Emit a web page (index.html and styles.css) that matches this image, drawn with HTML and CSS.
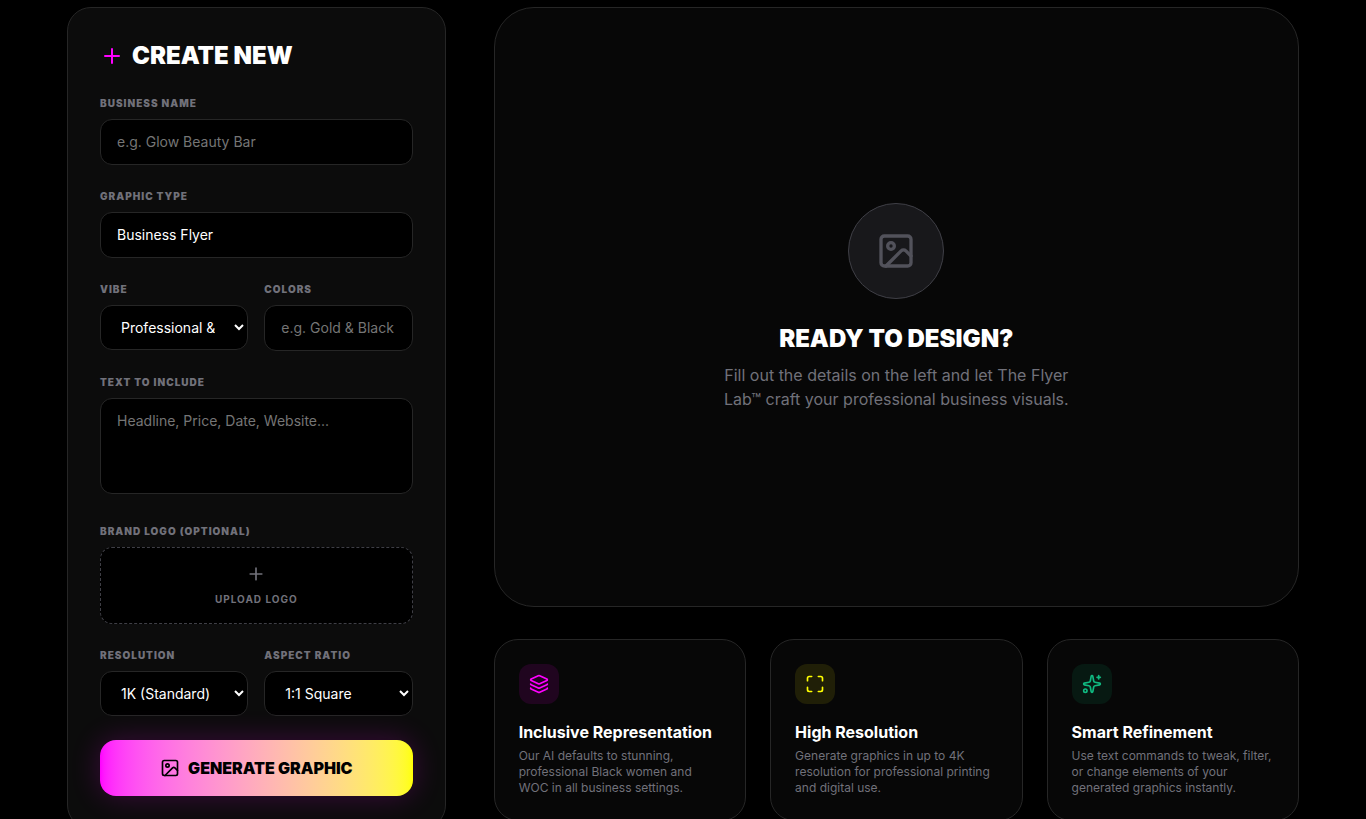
FILE: index.html
```html
<!DOCTYPE html>
<html lang="en">
<head>
    <meta charset="UTF-8">
    <meta name="viewport" content="width=device-width, initial-scale=1.0">
    <title>The Flyer Lab</title>
    <link rel="stylesheet" href="styles.css">
</head>
<body>
    <main class="layout">
        <form class="panel">
            <h2 class="panel-title">
                <svg class="icon icon-plus" width="24" height="24" viewBox="0 0 24 24"><path d="M5 12h14M12 5v14"/></svg>
                CREATE NEW
            </h2>

            <div class="field">
                <label for="businessName">Business Name</label>
                <input type="text" id="businessName" class="control" placeholder="e.g. Glow Beauty Bar">
            </div>

            <div class="field">
                <label for="graphicType">Graphic Type</label>
                <select id="graphicType" class="control control-plain">
                    <option>Business Flyer</option>
                    <option>Social Post</option>
                    <option>Logo</option>
                </select>
            </div>

            <div class="field-row">
                <div class="field">
                    <label for="vibe">Vibe</label>
                    <select id="vibe" class="control">
                        <option>Professional &amp; Clean</option>
                        <option>Bold &amp; Bright</option>
                    </select>
                </div>
                <div class="field">
                    <label for="colors">Colors</label>
                    <input type="text" id="colors" class="control" placeholder="e.g. Gold &amp; Black">
                </div>
            </div>

            <div class="field field-text">
                <label for="textInclude">Text to Include</label>
                <textarea id="textInclude" class="control" placeholder="Headline, Price, Date, Website..."></textarea>
            </div>

            <div class="field">
                <label for="logoBtn">Brand Logo (Optional)</label>
                <button type="button" id="logoBtn" class="upload">
                    <svg class="icon" width="20" height="20" viewBox="0 0 24 24"><path d="M5 12h14M12 5v14"/></svg>
                    <span>Upload Logo</span>
                </button>
            </div>

            <div class="field-row">
                <div class="field">
                    <label for="resolution">Resolution</label>
                    <select id="resolution" class="control">
                        <option>1K (Standard)</option>
                        <option>2K (High)</option>
                        <option>4K (Ultra)</option>
                    </select>
                </div>
                <div class="field">
                    <label for="aspect">Aspect Ratio</label>
                    <select id="aspect" class="control">
                        <option>1:1 Square</option>
                        <option>9:16 Story</option>
                        <option>16:9 Wide</option>
                    </select>
                </div>
            </div>

            <button type="submit" class="generate">
                <svg class="icon" width="20" height="20" viewBox="0 0 24 24"><rect x="3" y="3" width="18" height="18" rx="2"/><circle cx="9" cy="9" r="2"/><path d="m21 15-3.086-3.086a2 2 0 0 0-2.828 0L6 21"/></svg>
                GENERATE GRAPHIC
            </button>
        </form>

        <div class="content">
            <section class="preview">
                <div class="preview-icon">
                    <svg class="icon" width="40" height="40" viewBox="0 0 24 24"><rect x="3" y="3" width="18" height="18" rx="2"/><circle cx="9" cy="9" r="2"/><path d="m21 15-3.086-3.086a2 2 0 0 0-2.828 0L6 21"/></svg>
                </div>
                <h3>READY TO DESIGN?</h3>
                <p>Fill out the details on the left and let The Flyer Lab™ craft your professional business visuals.</p>
            </section>

            <section class="features">
                <article class="feature">
                    <div class="badge badge-pink">
                        <svg class="icon" width="20" height="20" viewBox="0 0 24 24"><path d="M12.83 2.18a2 2 0 0 0-1.66 0L2.6 6.08a1 1 0 0 0 0 1.83l8.58 3.91a2 2 0 0 0 1.66 0l8.58-3.9a1 1 0 0 0 0-1.83z"/><path d="M2 12a1 1 0 0 0 .58.91l8.6 3.91a2 2 0 0 0 1.65 0l8.58-3.9A1 1 0 0 0 22 12"/><path d="M2 17a1 1 0 0 0 .58.91l8.6 3.91a2 2 0 0 0 1.65 0l8.58-3.9A1 1 0 0 0 22 17"/></svg>
                    </div>
                    <h4>Inclusive Representation</h4>
                    <p>Our AI defaults to stunning, professional Black women and WOC in all business settings.</p>
                </article>
                <article class="feature">
                    <div class="badge badge-yellow">
                        <svg class="icon" width="20" height="20" viewBox="0 0 24 24"><path d="M8 3H5a2 2 0 0 0-2 2v3"/><path d="M21 8V5a2 2 0 0 0-2-2h-3"/><path d="M3 16v3a2 2 0 0 0 2 2h3"/><path d="M16 21h3a2 2 0 0 0 2-2v-3"/></svg>
                    </div>
                    <h4>High Resolution</h4>
                    <p>Generate graphics in up to 4K resolution for professional printing and digital use.</p>
                </article>
                <article class="feature">
                    <div class="badge badge-green">
                        <svg class="icon" width="20" height="20" viewBox="0 0 24 24"><path d="M11.017 2.814a1 1 0 0 1 1.966 0l1.051 5.558a2 2 0 0 0 1.594 1.594l5.558 1.051a1 1 0 0 1 0 1.966l-5.558 1.051a2 2 0 0 0-1.594 1.594l-1.051 5.558a1 1 0 0 1-1.966 0l-1.051-5.558a2 2 0 0 0-1.594-1.594l-5.558-1.051a1 1 0 0 1 0-1.966l5.558-1.051a2 2 0 0 0 1.594-1.594z"/><path d="M20 2v4"/><path d="M22 4h-4"/><circle cx="4" cy="20" r="2"/></svg>
                    </div>
                    <h4>Smart Refinement</h4>
                    <p>Use text commands to tweak, filter, or change elements of your generated graphics instantly.</p>
                </article>
            </section>
        </div>
    </main>
</body>
</html>
```
FILE: styles.css
```css
* {
    box-sizing: border-box;
    margin: 0;
    padding: 0;
}
body {
    background: #000;
    color: #fff;
    font-family: Inter, sans-serif;
    font-size: 16px;
    line-height: 24px;
    height: 100vh;
    overflow: hidden;
}
.layout {
    display: grid;
    grid-template-columns: repeat(12, 1fr);
    gap: 48px;
    align-items: start;
    max-width: 1280px;
    margin: 0 auto;
    padding: 7px 24px;
}
.icon {
    display: block;
    flex-shrink: 0;
    fill: none;
    stroke: currentColor;
    stroke-width: 2;
    stroke-linecap: round;
    stroke-linejoin: round;
}

/* Left form */
.panel {
    grid-column: span 4;
    display: flex;
    flex-direction: column;
    gap: 24px;
    padding: 32px;
    background: #0c0c0c;
    border: 1px solid #262626;
    border-radius: 24px;
}
.panel-title {
    display: flex;
    align-items: center;
    gap: 8px;
    font-size: 24px;
    line-height: 32px;
    font-weight: 900;
}
.icon-plus {
    color: #f0f;
}
.field-row {
    display: grid;
    grid-template-columns: 1fr 1fr;
    gap: 16px;
}
.field {
    min-width: 0;
}
.field-text {
    padding-bottom: 6px;
}
label {
    display: block;
    margin-bottom: 8px;
    color: #71717a;
    font-size: 10px;
    line-height: 15px;
    font-weight: 900;
    letter-spacing: 0.1em;
    text-transform: uppercase;
}
.control {
    display: block;
    width: 100%;
    padding: 12px 16px;
    background: #000;
    color: #fff;
    border: 1px solid #262626;
    border-radius: 12px;
    font-family: inherit;
    font-size: 14px;
    line-height: 20px;
    font-weight: 400;
}
.control::placeholder {
    color: #757575;
}
select.control {
    height: 45px;
}
select.control-plain {
    height: 46px;
    appearance: none;
}
textarea.control {
    height: 96px;
    resize: none;
}
.upload {
    display: flex;
    flex-direction: column;
    align-items: center;
    gap: 8px;
    width: 100%;
    padding: 16px;
    background: #000;
    color: #71717a;
    border: 1px dashed #3f3f46;
    border-radius: 12px;
    font-family: inherit;
    font-size: 10px;
    line-height: 15px;
    font-weight: 700;
    letter-spacing: 0.1em;
    text-transform: uppercase;
    cursor: pointer;
}
.generate {
    display: flex;
    align-items: center;
    justify-content: center;
    gap: 8px;
    width: 100%;
    padding: 16px;
    background: linear-gradient(to right in oklab, #f0f, #ff0);
    color: #000;
    border: none;
    border-radius: 16px;
    box-shadow: 0 0 30px rgba(255, 0, 255, 0.2);
    font-family: inherit;
    font-size: 16px;
    line-height: 24px;
    font-weight: 900;
    cursor: pointer;
}

/* Right side */
.content {
    grid-column: span 8;
    display: flex;
    flex-direction: column;
    gap: 32px;
}
.preview {
    display: flex;
    flex-direction: column;
    align-items: center;
    justify-content: center;
    min-height: 600px;
    background: #070707;
    border: 1px solid #262626;
    border-radius: 40px;
    text-align: center;
}
.preview-icon {
    display: flex;
    align-items: center;
    justify-content: center;
    width: 96px;
    height: 96px;
    margin-bottom: 24px;
    background: #18181b;
    color: #52525b;
    border: 1px solid #3f3f46;
    border-radius: 50%;
}
.preview h3 {
    margin-bottom: 8px;
    font-size: 24px;
    line-height: 32px;
    font-weight: 900;
}
.preview p {
    max-width: 384px;
    color: #71717a;
}
.features {
    display: grid;
    grid-template-columns: repeat(3, 1fr);
    gap: 24px;
}
.feature {
    padding: 24px;
    background: #070707;
    border: 1px solid #262626;
    border-radius: 24px;
}
.badge {
    display: flex;
    align-items: center;
    justify-content: center;
    width: 40px;
    height: 40px;
    margin-bottom: 16px;
    border-radius: 12px;
}
.badge-pink {
    background: #20051f;
    color: #f0f;
}
.badge-yellow {
    background: #201f07;
    color: #ff0;
}
.badge-green {
    background: #071912;
    color: #10b981;
}
.feature h4 {
    margin-bottom: 4px;
    font-size: 16px;
    line-height: 24px;
    font-weight: 700;
}
.feature p {
    color: #71717a;
    font-size: 12px;
    line-height: 16px;
}
```
